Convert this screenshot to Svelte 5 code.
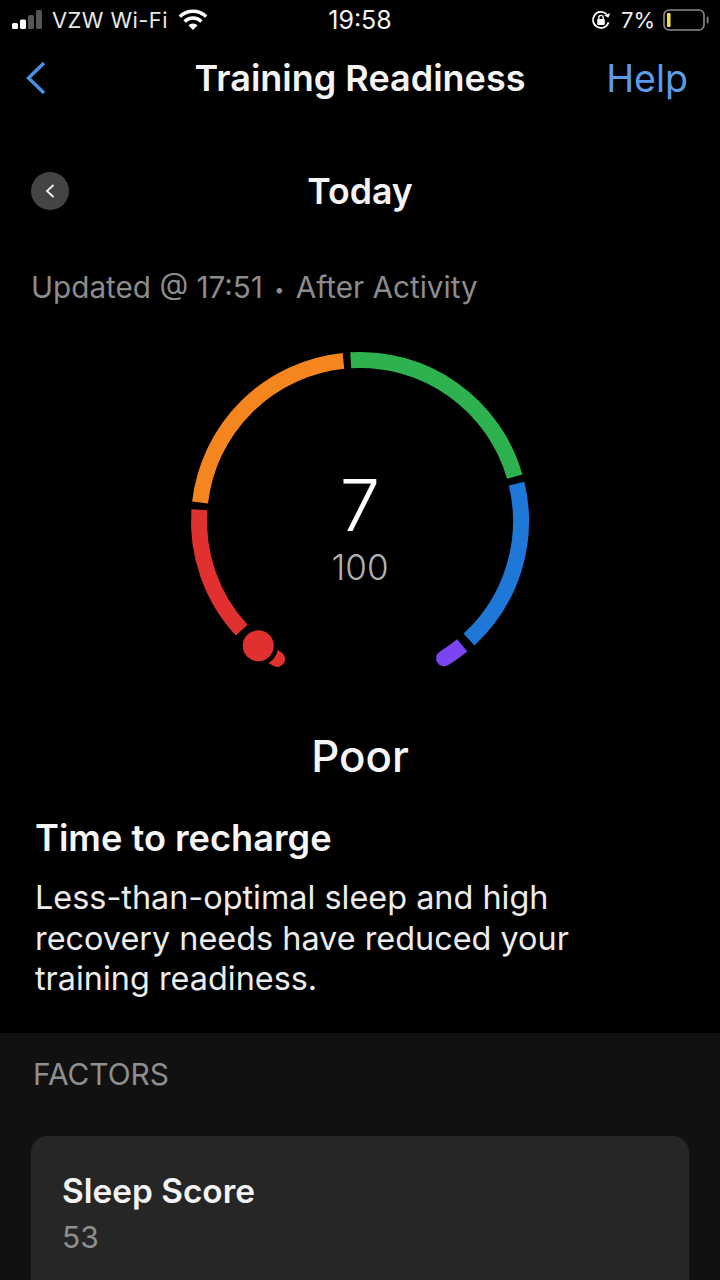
<script>
  const cx = 180;
  const cy = 180;
  const r = 161;

  const arcs = [
    { from: -132.7, to: -86, color: "#e0302f" },
    { from: -83.4, to: -5.9, color: "#f5851f" },
    { from: -3.3, to: 74, color: "#2db24f" },
    { from: 76.6, to: 137.4, color: "#1f78d8" },
    { from: 140.6, to: 146, color: "#7a45f2" },
    { from: 146, to: 148.5, color: "#7a45f2", cap: "round" },
    { from: -142, to: -149, color: "#e0302f", cap: "round" },
  ];

  function point(deg) {
    const a = (deg * Math.PI) / 180;
    return [cx + r * Math.sin(a), cy - r * Math.cos(a)];
  }

  function arc(from, to) {
    const [x1, y1] = point(from);
    const [x2, y2] = point(to);
    const large = Math.abs(to - from) > 180 ? 1 : 0;
    const sweep = to > from ? 1 : 0;
    return `M${x1.toFixed(2)} ${y1.toFixed(2)}A${r} ${r} 0 ${large} ${sweep} ${x2.toFixed(2)} ${y2.toFixed(2)}`;
  }

  const marker = point(-140.8);
</script>

<div class="screen">
  <div class="status">
    <div class="status-left">
      <svg class="signal" width="32" height="24" viewBox="0 0 32 24">
        <rect x="0" y="15" width="6" height="6" rx="1.5" fill="#fff" />
        <rect x="8" y="11.5" width="6" height="9.5" rx="1.5" fill="#fff" />
        <rect x="16" y="7" width="6" height="14" rx="1.5" fill="#555" />
        <rect x="24" y="2" width="6" height="19" rx="1.5" fill="#555" />
      </svg>
      <span class="carrier">VZW Wi-Fi</span>
      <svg class="wifi" width="30" height="22" viewBox="0 0 30 22" fill="none" stroke="#fff" stroke-width="3.4">
        <path d="M1.8 7.6a19 19 0 0 1 26.4 0" />
        <path d="M6.6 12.4a12.2 12.2 0 0 1 16.8 0" />
        <path d="M15 21l-4.6-4.7a6.6 6.6 0 0 1 9.2 0z" fill="#fff" stroke="none" />
      </svg>
    </div>
    <span class="clock">19:58</span>
    <div class="status-right">
      <svg class="rotate" width="20" height="20" viewBox="0 0 20 20" fill="none">
        <path d="M17.6 12.4A8 8 0 1 1 15.6 4.2" stroke="#fff" stroke-width="1.8" />
        <path d="M13.6 6.6l5 .2-.8-5z" fill="#fff" transform="rotate(30 16 5)" />
        <rect x="6.2" y="9" width="7.6" height="6" rx="1" fill="#fff" />
        <path d="M7.8 9V7.6a2.2 2.2 0 0 1 4.4 0V9" stroke="#fff" stroke-width="1.3" />
      </svg>
      <span class="pct">7%</span>
      <svg class="battery" width="46" height="22" viewBox="0 0 46 22" fill="none">
        <rect x="1" y="1" width="40" height="20" rx="5" stroke="#8a8a8a" stroke-width="1.6" />
        <rect x="4" y="4" width="3.6" height="14" rx="1" fill="#f2dc4a" />
        <rect x="43.6" y="7.5" width="2" height="7" rx="1" fill="#777" />
      </svg>
    </div>
  </div>

  <header class="nav">
    <svg class="back" width="24" height="36" viewBox="0 0 24 36" fill="none">
      <path d="M20 3L4.5 18 20 33" stroke="#4a90e2" stroke-width="3.4" />
    </svg>
    <h1>Training Readiness</h1>
    <span class="help">Help</span>
  </header>

  <div class="day">
    <span class="prev">
      <svg width="12" height="16" viewBox="0 0 12 16" fill="none">
        <path d="M9.5 2L3 8l6.5 6" stroke="#f2f2f2" stroke-width="1.8" />
      </svg>
    </span>
    <h2>Today</h2>
  </div>

  <p class="updated">Updated @ 17:51 <span class="dot">•</span> After Activity</p>

  <div class="gauge">
    <svg width="360" height="340" viewBox="0 0 360 340" fill="none">
      {#each arcs as a}
        <path d={arc(a.from, a.to)} stroke={a.color} stroke-width="16" stroke-linecap={a.cap ?? "butt"} />
      {/each}
      <circle cx={marker[0]} cy={marker[1]} r="20" fill="#000" />
      <circle cx={marker[0]} cy={marker[1]} r="15.5" fill="#e0302f" />
    </svg>
    <div class="score">
      <span class="value">7</span>
      <span class="max">100</span>
    </div>
  </div>

  <h3 class="level">Poor</h3>

  <section class="summary">
    <h4>Time to recharge</h4>
    <p>Less-than-optimal sleep and high recovery needs have reduced your training readiness.</p>
  </section>

  <section class="factors">
    <h5>FACTORS</h5>
    <div class="card">
      <span class="name">Sleep Score</span>
      <span class="num">53</span>
      <span class="num rating">Poor</span>
    </div>
  </section>
</div>

<style>
  :global(body) {
    background: #000;
  }

  .screen {
    width: 720px;
    height: 1280px;
    overflow: hidden;
    background: #000;
    color: #fff;
    font-family: Inter, "Liberation Sans", sans-serif;
  }

  /* status bar */
  .status {
    position: relative;
    display: flex;
    align-items: center;
    justify-content: space-between;
    height: 40px;
    padding: 0 12px;
    font-size: 22px;
  }

  .status-left,
  .status-right {
    display: flex;
    align-items: center;
  }

  .signal {
    margin-right: 8px;
  }

  .carrier {
    color: #e8e8e8;
    letter-spacing: 0.4px;
  }

  .wifi {
    margin-left: 10px;
  }

  .clock {
    position: absolute;
    left: 0;
    right: 0;
    text-align: center;
    font-size: 25px;
    color: #f2f2f2;
  }

  .status-right {
    margin-right: -1px;
  }

  .pct {
    margin: 0 8px 0 10px;
    color: #eee;
  }

  /* nav */
  .nav {
    display: flex;
    align-items: center;
    justify-content: space-between;
    height: 76px;
    padding: 0 32px 0 24px;
    position: relative;
  }

  .nav h1 {
    position: absolute;
    left: 0;
    right: 0;
    margin: 0;
    text-align: center;
    font-size: 36px;
    font-weight: 600;
    color: #f4f4f4;
  }

  .help {
    font-size: 37.5px;
    color: #5b9be8;
  }

  /* date row */
  .day {
    position: relative;
    display: flex;
    align-items: center;
    justify-content: center;
    height: 76px;
    margin-top: 37px;
  }

  .day h2 {
    margin: 0;
    font-size: 35.7px;
    font-weight: 600;
    color: #f4f4f4;
  }

  .prev {
    position: absolute;
    left: 31px;
    top: 19px;
    display: flex;
    align-items: center;
    justify-content: center;
    width: 38px;
    height: 38px;
    border-radius: 50%;
    background: #444;
  }

  .updated {
    margin: 40px 0 0;
    padding-left: 31px;
    font-size: 29.7px;
    line-height: 36px;
    color: #8c8c8c;
  }

  .dot {
    font-size: 18px;
    vertical-align: 2px;
    padding: 0 3px;
  }

  /* gauge */
  .gauge {
    position: relative;
    width: 360px;
    height: 340px;
    margin: 33px auto 0;
  }

  .gauge svg {
    display: block;
  }

  .score {
    position: absolute;
    left: 0;
    right: 0;
    top: 122px;
    display: flex;
    flex-direction: column;
    align-items: center;
  }

  .value {
    font-size: 72px;
    line-height: 84px;
    font-weight: 300;
  }

  .max {
    font-size: 35px;
    line-height: 40px;
    font-weight: 300;
    color: #b0b0b0;
  }

  .level {
    margin: 52px 0 0;
    text-align: center;
    font-size: 43.8px;
    line-height: 48px;
    font-weight: 500;
    color: #f6f6f6;
  }

  .summary {
    padding: 36px 100px 0 35px;
  }

  .summary h4 {
    margin: 0;
    font-size: 36.2px;
    line-height: 42px;
    font-weight: 600;
    color: #f6f6f6;
  }

  .summary p {
    margin: 19px 0 0;
    font-size: 32.4px;
    line-height: 40.5px;
    color: #ececec;
  }

  /* factors */
  .factors {
    margin-top: 33px;
    height: 300px;
    background: #111;
    padding: 22px 31px 0;
  }

  .factors h5 {
    margin: 0;
    padding-left: 2px;
    font-size: 29.9px;
    line-height: 38px;
    font-weight: 400;
    color: #8f8f8f;
  }

  .card {
    display: flex;
    flex-direction: column;
    margin-top: 43px;
    height: 240px;
    padding: 34px 31px 0;
    border-radius: 16px;
    background: #262626;
  }

  .name {
    font-size: 33.4px;
    line-height: 42px;
    font-weight: 600;
    color: #f4f4f4;
  }

  .num {
    margin-top: 5px;
    font-size: 30px;
    line-height: 40px;
    color: #8f8f8f;
  }

  .rating {
    margin-top: 15px;
  }
</style>
